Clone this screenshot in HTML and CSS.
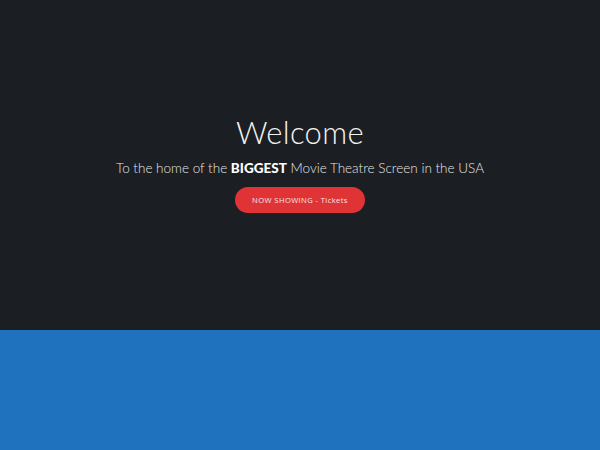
FILE: index.html
```html
<!DOCTYPE html>
<html>
<head>
<meta charset="utf-8">
<link rel="stylesheet" href="styles.css">
</head>
<body>
<section class="hero">
  <h1 class="title">Welcome</h1>
  <p class="subtitle">To the home of the <strong>BIGGEST</strong> Movie Theatre Screen in the USA</p>
  <a class="btn" href="#">NOW SHOWING - Tickets</a>
</section>
<section class="blue"></section>
</body>
</html>
```
FILE: styles.css
```css
html, body { margin: 0; padding: 0; }
body { background: #1f72be; font-family: Lato, "Noto Sans", sans-serif; }
.hero {
  height: 330px;
  background: #1b1e22;
  display: flex;
  flex-direction: column;
  align-items: center;
  justify-content: flex-start;
  padding-top: 113px;
  box-sizing: border-box;
  color: #f2f2f2;
}
.title {
  margin: 0;
  font-weight: 300;
  font-size: 31px;
  line-height: 38px;
  letter-spacing: 0.3px;
}
.subtitle {
  margin: 8px 0 0;
  font-size: 13.5px;
  line-height: 18px;
  font-weight: 300;
  color: #e6e6e6;
}
.subtitle strong { font-weight: 900; color: #fff; }
.btn {
  margin-top: 10px;
  width: 130px;
  height: 26px;
  border-radius: 13px;
  background: #e03335;
  color: #f3e6e6;
  text-decoration: none;
  font-family: "Open Sans", sans-serif;
  font-weight: 500;
  font-size: 7.6px;
  letter-spacing: 0.4px;
  display: flex;
  align-items: center;
  justify-content: center;
}
.blue { height: 120px; background: #1f72be; }
```
